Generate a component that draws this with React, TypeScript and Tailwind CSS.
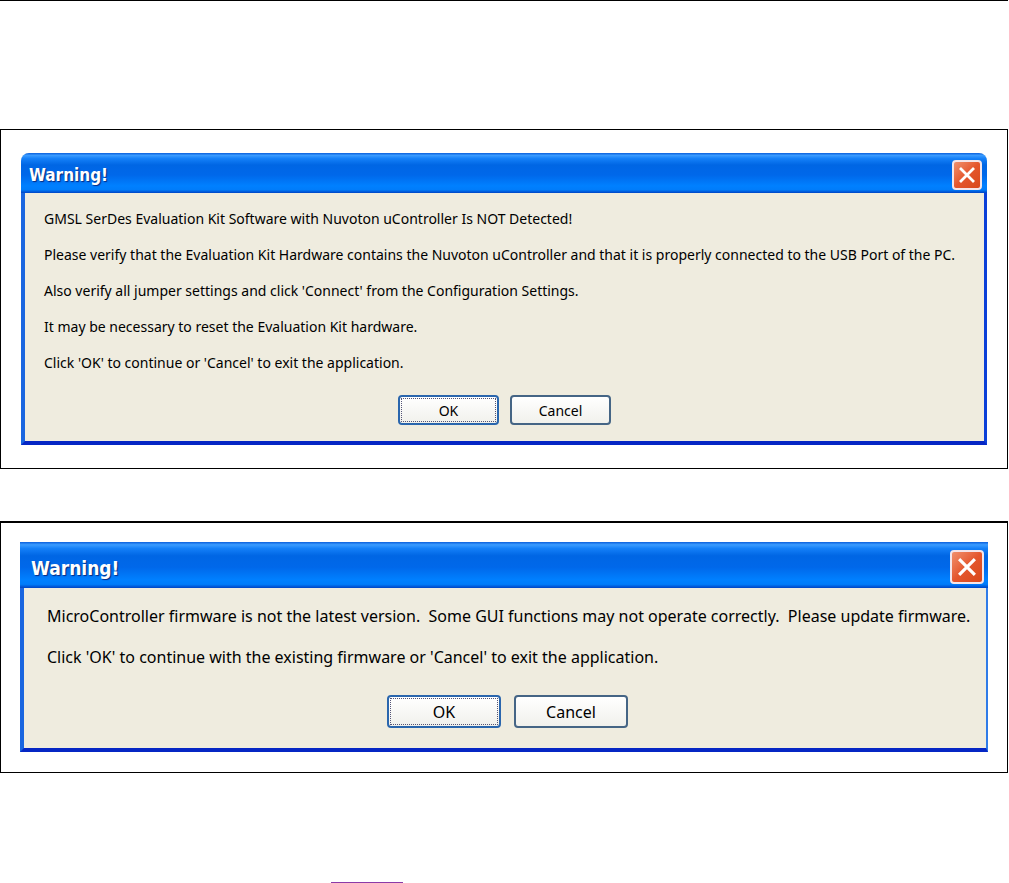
import React from 'react';
import clsx from 'clsx';

interface WarningDialogProps {
  id: string;
  messages: string[];
  size: 'sm' | 'lg';
}

const CloseIcon: React.FC<{ className?: string }> = ({ className }) => (
  <svg className={className} viewBox="0 0 16 16" fill="none" stroke="#fff" strokeWidth="2.8" aria-hidden="true">
    <path d="M1 1 L15 15 M15 1 L1 15" />
  </svg>
);

const DialogButton: React.FC<{ label: string; focused?: boolean; large: boolean }> = ({ label, focused, large }) => (
  <button
    type="button"
    className={clsx(
      'rounded-[4px] border-2 bg-linear-to-b from-white to-[#f1f1ec] text-black',
      large ? 'h-[33px] w-[114px] text-[16px]' : 'h-[30px] w-[101px] text-[14px]',
      focused ? 'border-[#2a66ad] p-px' : 'border-[#456585]',
    )}
  >
    <span
      className={clsx(
        'flex h-full items-center justify-center',
        focused && 'border border-dotted border-[#555577]',
      )}
    >
      {label}
    </span>
  </button>
);

const WarningDialog: React.FC<WarningDialogProps> = ({ id, messages, size }) => {
  const large = size === 'lg';

  return (
    <section
      role="dialog"
      aria-labelledby={id}
      className={clsx(
        'overflow-hidden bg-[#efecdf] text-black',
        !large && 'rounded-t-[8px]',
      )}
    >
      <header
        className={clsx(
          'flex items-center justify-between bg-[linear-gradient(to_bottom,#0a5fdc_0%,#3a9bff_6%,#1480f8_14%,#0066e4_30%,#0068ea_55%,#0080ff_82%,#007cfa_92%,#0044c4_100%)]',
          large ? 'h-[46px] pr-1 pl-[11px]' : 'h-10 pr-[5px] pl-2',
        )}
      >
        <h2
          id={id}
          className={clsx(
            "pt-[6px] font-bold text-white [font-family:'DejaVu_Sans_Condensed','DejaVu_Sans',sans-serif] [text-shadow:1px_1px_1px_#062a80]",
            large ? 'text-[19px]' : 'text-[17px]',
          )}
        >
          Warning!
        </h2>
        <button
          type="button"
          aria-label="Close"
          className={clsx(
            'mt-1 flex items-center justify-center rounded-[4px] border-2 border-[#f4e6ea] bg-linear-to-br from-[#f0906c] via-[#e4562c] to-[#d8481c]',
            large ? 'size-[34px]' : 'size-[30px]',
          )}
        >
          <CloseIcon className={large ? 'size-[18px]' : 'size-4'} />
        </button>
      </header>
      <div
        className={clsx(
          'border-b-4 border-l-4 border-b-[#0526c4] border-l-[#1a66e0]',
          large
            ? 'border-r-2 border-r-[#2f7be8] pt-2 pr-[18px] pb-5 pl-[23px]'
            : 'border-r-[3px] border-r-[#0a3fd8] px-[19px] pt-2 pb-4',
        )}
      >
        {messages.map((message) => (
          <p
            key={message}
            className={clsx(
              'whitespace-pre',
              large ? 'text-[16px] leading-[41px]' : 'text-[14px] leading-[36px]',
            )}
          >
            {message}
          </p>
        ))}
        <div className={clsx('flex justify-center', large ? 'gap-[13px] pt-[17px]' : 'gap-[11px] pt-[14px]')}>
          <DialogButton label="OK" focused large={large} />
          <DialogButton label="Cancel" large={large} />
        </div>
      </div>
    </section>
  );
};

export default function App() {
  return (
    <main className="overflow-hidden bg-white pr-px [font-family:'Noto_Sans','Open_Sans',sans-serif]">
      <hr className="border-t border-black" />
      <div className="mt-32 border border-black px-5 pt-[23px] pb-[23px]">
        <WarningDialog
          id="hardware-warning"
          size="sm"
          messages={[
            'GMSL SerDes Evaluation Kit Software with Nuvoton uController Is NOT Detected!',
            'Please verify that the Evaluation Kit Hardware contains the Nuvoton uController and that it is properly connected to the USB Port of the PC.',
            "Also verify all jumper settings and click 'Connect' from the Configuration Settings.",
            'It may be necessary to reset the Evaluation Kit hardware.',
            "Click 'OK' to continue or 'Cancel' to exit the application.",
          ]}
        />
      </div>
      <div className="mt-[52px] border border-t-2 border-black px-[19px] pt-[19px] pb-[20px]">
        <WarningDialog
          id="firmware-warning"
          size="lg"
          messages={[
            'MicroController firmware is not the latest version.  Some GUI functions may not operate correctly.  Please update firmware.',
            "Click 'OK' to continue with the existing firmware or 'Cancel' to exit the application.",
          ]}
        />
      </div>
      <hr className="mt-[109px] ml-[331px] w-[72px] border-t border-[#8b3aa8]" />
    </main>
  );
}
